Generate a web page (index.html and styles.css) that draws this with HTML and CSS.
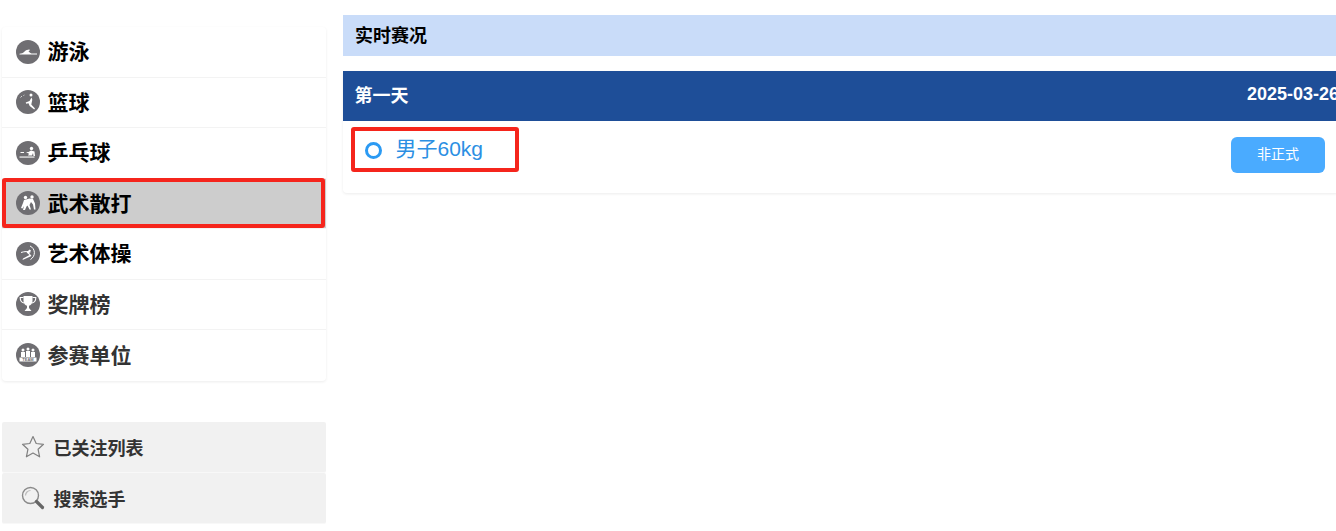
FILE: index.html
```html
<!DOCTYPE html>
<html lang="zh-CN">
<head>
    <meta charset="UTF-8">
    <title>实时赛况</title>
    <link rel="stylesheet" href="styles.css">
</head>
<body>
    <div class="page">
        <div class="side">
            <ul class="menu">
                <li class="menu_item">
                    <svg class="menu_icon" viewBox="0 0 24 24"><circle cx="12" cy="12" r="12" fill="#6f6e72"/><path d="M3.500 13.800c2-.2 3.500-.8 4.500-1.800l2-1.800 3-.8 1.200.6-1.700 1.300 1.500 1.400 1.500.9H21v1H3.500z" fill="#fff"/></svg>
                    <span>游泳</span>
                </li>
                <li class="menu_item">
                    <svg class="menu_icon" viewBox="0 0 24 24"><circle cx="12" cy="12" r="12" fill="#6f6e72"/><circle cx="15" cy="5" r="1.500" fill="#fff"/><path d="M15.500 7.500l-2 3.500-3.800 1.600.5 1.200 2.300-.6 1.200 2.800 4.500 3.500.8-1-3.700-4 1-4.800z" fill="#fff"/><path d="M4.500 7.500l1.500-1.500M7.500 5.800l.8-1" stroke="#ddd" stroke-width=".9"/></svg>
                    <span>篮球</span>
                </li>
                <li class="menu_item">
                    <svg class="menu_icon" viewBox="0 0 24 24"><circle cx="12" cy="12" r="12" fill="#6f6e72"/><circle cx="15.500" cy="7.500" r="1.700" fill="#fff"/><path d="M4.500 11h3.500v.9H4.500zM10 11h2.500l2.500-1.500 3.500 1 .5 4.500h-1.500l-.5-3-1 2.500H12l1-1.800-3-1.800z" fill="#fff"/><path d="M3.500 15.500h15v1.100h-15z" fill="#fff"/></svg>
                    <span>乒乓球</span>
                </li>
                <li class="menu_item menu_item_on">
                    <svg class="menu_icon" viewBox="0 0 24 24"><circle cx="12" cy="12" r="12" fill="#6f6e72"/><circle cx="9.500" cy="6.500" r="1.700" fill="#fff"/><circle cx="16" cy="6" r="1.700" fill="#fff"/><path d="M8 9l3-.8 2.500-.7 3.500.5 2 4.500.5 6h-1.500l-1-5-2-2.500-1.500 3 1.500 4.500h-1.500l-2-4-1 1-1.500 3.500H7l1-4-1.500 2.500-1.500-.5 2-5z" fill="#fff"/></svg>
                    <span>武术散打</span>
                </li>
                <li class="menu_item">
                    <svg class="menu_icon" viewBox="0 0 24 24"><circle cx="12" cy="12" r="12" fill="#6f6e72"/><path d="M5 10.500c3.500-1.200 7-1.200 9.500-.5M14 4c5.500 2.500 6 10 .5 13.500" stroke="#fff" stroke-width="1" fill="none"/><path d="M13.500 7.500l-3 3 3 2.500-6.500 3.500-.5 1.500 9-4-2.300-3 1.800-2.500z" fill="#fff"/></svg>
                    <span>艺术体操</span>
                </li>
                <li class="menu_item menu_item_dark">
                    <svg class="menu_icon" viewBox="0 0 24 24"><circle cx="12" cy="12" r="12" fill="#6f6e72"/><path d="M7.500 4h9v5c0 2.800-2 4.300-3.500 4.800V16l2.500 3h-7l2.500-3v-2.200C9.500 13.300 7.500 11.800 7.500 9z" fill="#fff"/><path d="M7.500 5.500H4.200c0 3.200 1.200 5 3.800 5.500M16.500 5.500h3.300c0 3.200-1.200 5-3.800 5.500" stroke="#fff" stroke-width="1.100" fill="none"/></svg>
                    <span>奖牌榜</span>
                </li>
                <li class="menu_item menu_item_dark">
                    <svg class="menu_icon" viewBox="0 0 24 24"><circle cx="12" cy="12" r="12" fill="#6f6e72"/><circle cx="7" cy="7" r="1.500" fill="#fff"/><circle cx="12" cy="6" r="1.500" fill="#fff"/><circle cx="17" cy="7" r="1.500" fill="#fff"/><path d="M5 9h4v5H5zM10 8h4v6h-4zM15 9h4v5h-4z" fill="#fff"/><path d="M3.500 14.500h17v4h-17z" fill="#fff"/><text class="team_txt" x="12" y="18">TEAM</text></svg>
                    <span>参赛单位</span>
                </li>
            </ul>
            <div class="tools">
                <div class="tools_item">
                    <svg class="tools_icon" viewBox="0 0 24 24"><path d="M12 1.500l3.200 7 7.300.8-5.400 5 1.500 7.500-6.600-3.800-6.600 3.800 1.500-7.500-5.400-5 7.300-.8z" fill="none" stroke="#808080" stroke-width="1.200" stroke-linejoin="round"/></svg>
                    <span>已关注列表</span>
                </div>
                <div class="tools_item">
                    <svg class="tools_icon" viewBox="0 0 24 24"><circle cx="9.500" cy="9.500" r="8" fill="none" stroke="#8a8a8a" stroke-width="1.400"/><path d="M4.500 9.500a5 5 0 0 1 5-5" fill="none" stroke="#bbb" stroke-width="1.200"/><path d="M15.500 15.500l6 6" stroke="#666" stroke-width="3.200" stroke-linecap="round"/></svg>
                    <span>搜索选手</span>
                </div>
            </div>
        </div>

        <div class="main">
            <div class="main_title">实时赛况</div>
            <div class="day">
                <div class="day_head">
                    <span>第一天</span>
                    <span>2025-03-26</span>
                </div>
                <div class="day_row">
                    <div class="event">
                        <i class="event_dot"></i>
                        <span>男子60kg</span>
                    </div>
                    <a href="javascript: void(0)" class="event_btn">非正式</a>
                </div>
            </div>
        </div>
    </div>

    <!-- 红框标注 -->
    <div class="mark mark_menu"></div>
    <div class="mark mark_event"></div>
</body>
</html>
```

FILE: styles.css
```css
* {
    box-sizing: border-box;
}
html, body {
    margin: 0;
    height: 100%;
    overflow: hidden;
    background: #fff;
}
body {
    font-family: "Liberation Sans", "Noto Sans CJK SC", sans-serif;
    position: relative;
}
.page {
    display: flex;
    width: 1339px;
    padding: 15px 0 0 2px;
}
.side {
    width: 324px;
    flex: none;
    padding-top: 12px;
}
.menu {
    list-style: none;
    margin: 0;
    padding: 0;
    border-radius: 4px;
    box-shadow: 0 1px 3px rgba(0,0,0,.08);
}
.menu_item {
    display: flex;
    align-items: center;
    height: 50.5px;
    padding-left: 14px;
    font-size: 21px;
    font-weight: bold;
    color: #000;
    border-bottom: 1px solid #f3f3f3;
}
.menu_item span {
    padding-bottom: 3px;
}
.menu_item:last-child {
    border-bottom: 0;
}
.menu_item_on {
    background: #cdcdcd;
}
.menu_item_dark {
    color: #333;
}
.menu_icon {
    width: 24px;
    height: 24px;
    margin-right: 7.500px;
    flex: none;
}
.team_txt {
    font-size: 4px;
    font-weight: bold;
    text-anchor: middle;
    fill: #6f6e72;
}
.tools {
    margin-top: 41px;
}
.tools_item {
    display: flex;
    align-items: center;
    height: 51px;
    padding-left: 19px;
    font-size: 18px;
    font-weight: bold;
    color: #333;
    background: #f1f1f1;
    border-bottom: 1px solid #f8f8f8;
    border-radius: 2px;
}
.tools_icon {
    width: 24px;
    height: 24px;
    margin-right: 8.500px;
    flex: none;
}
.main {
    flex: 1;
    margin-left: 17px;
}
.main_title {
    height: 41px;
    line-height: 42px;
    padding-left: 12px;
    font-size: 18px;
    font-weight: bold;
    color: #000;
    background: #c9dcf9;
}
.day {
    margin-top: 15px;
    border-radius: 4px;
    box-shadow: 0 1px 3px rgba(0,0,0,.08);
}
.day_head {
    display: flex;
    justify-content: space-between;
    align-items: center;
    height: 50px;
    padding: 0 0 4px 11.500px;
    font-size: 18px;
    font-weight: bold;
    color: #fff;
    background: #1e4e98;
}
.day_row {
    display: flex;
    justify-content: space-between;
    height: 72px;
    padding: 16px 14px 0 22px;
}
.event {
    display: flex;
    align-items: center;
    height: 24px;
    font-size: 21px;
    color: #2b8fe3;
}
.event .event_dot + span {
    padding-bottom: 4px;
}
.event_dot {
    width: 17px;
    height: 17px;
    margin: 2px 13.500px 0 0;
    border: 3px solid #2b9af3;
    border-radius: 50%;
}
.event_btn {
    width: 94px;
    height: 36px;
    line-height: 34px;
    text-align: center;
    font-size: 14px;
    color: #fff;
    text-decoration: none;
    background: #4aabff;
    border-radius: 6px;
}
.mark {
    position: absolute;
    border: 4px solid #f5251c;
    border-radius: 3px;
}
.mark_menu {
    left: 2px;
    top: 178px;
    width: 323px;
    height: 50px;
}
.mark_event {
    left: 351px;
    top: 127px;
    width: 168px;
    height: 45px;
}
```
